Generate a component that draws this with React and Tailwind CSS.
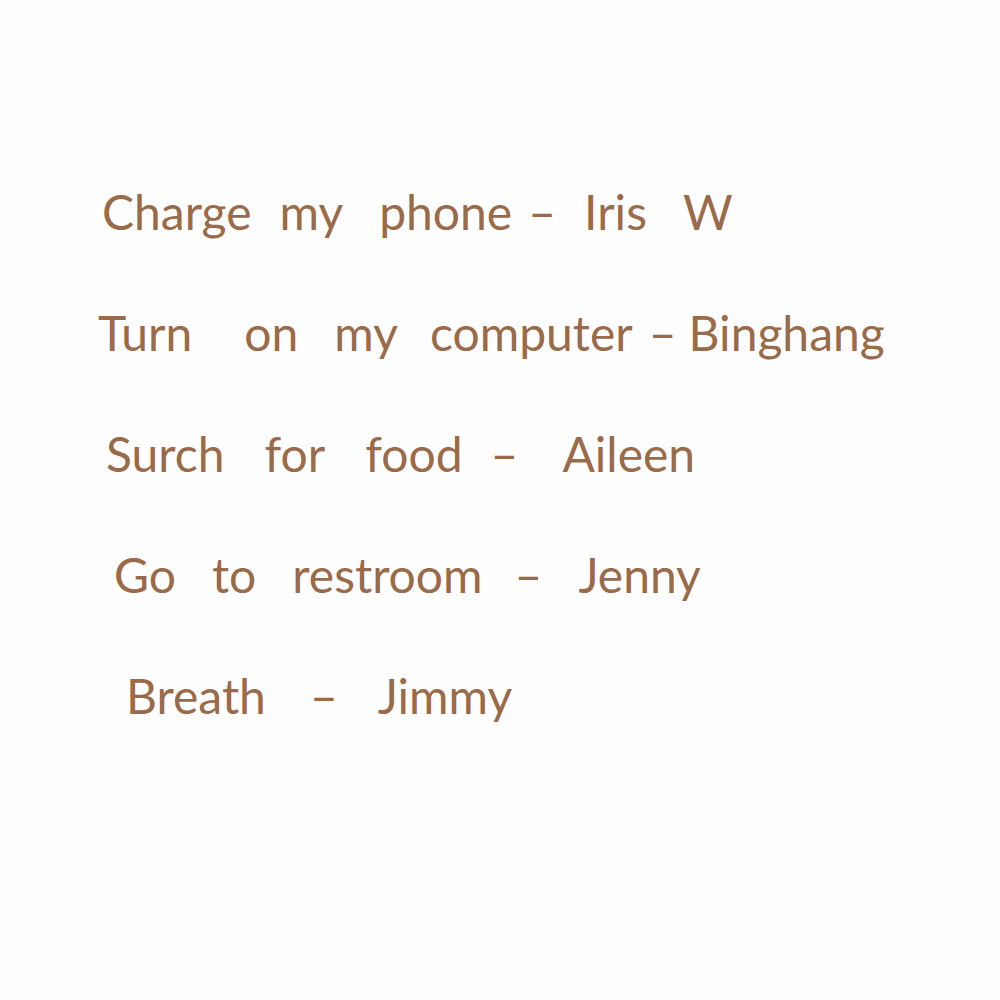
const notes = [
  {
    indent: "pl-[102px]",
    words: [["Charge", ""], ["my", "ml-7"], ["phone", "ml-9"], ["–", "ml-4"], ["Iris", "ml-7"], ["W", "ml-9"]],
  },
  {
    indent: "pl-[98px]",
    words: [["Turn", ""], ["on", "ml-13"], ["my", "ml-9"], ["computer", "ml-8"], ["–", "ml-4"], ["Binghang", "ml-3"]],
  },
  {
    indent: "pl-[106px]",
    words: [["Surch", ""], ["for", "ml-10"], ["food", "ml-10"], ["–", "ml-7"], ["Aileen", "ml-11"]],
  },
  {
    indent: "pl-[114px]",
    words: [["Go", ""], ["to", "ml-9"], ["restroom", "ml-9"], ["–", "ml-8"], ["Jenny", "ml-9"]],
  },
  {
    indent: "pl-[126px]",
    words: [["Breath", ""], ["–", "ml-11"], ["Jimmy", "ml-10"]],
  },
];

export default function App() {
  return (
    <main className="min-h-screen bg-[#fefefe] pt-[182px] font-['Lato',sans-serif] text-5xl leading-[60px] text-[#996b4a]">
      <ul className="flex flex-col gap-[61px]">
        {notes.map((note) => (
          <li key={note.indent} className={`flex ${note.indent}`}>
            {note.words.map(([word, space], i) => (
              <span key={i} className={space}>{word}</span>
            ))}
          </li>
        ))}
      </ul>
    </main>
  );
}
